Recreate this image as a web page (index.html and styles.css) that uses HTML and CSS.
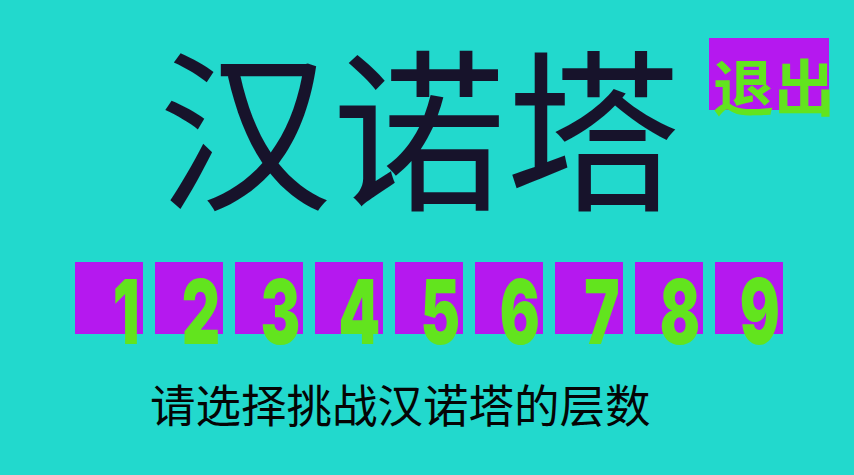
FILE: index.html
```html
<!DOCTYPE html>
<html lang="zh-CN">
<head>
<meta charset="utf-8">
<title>汉诺塔</title>
<link rel="stylesheet" href="styles.css">
</head>
<body>
<div class="page">
  <header class="top">
    <h1 class="title">汉诺塔</h1>
    <button class="exit" type="button">退出</button>
  </header>
  <div class="levels">
    <button class="level" type="button"><span class="num">1</span></button>
    <button class="level" type="button"><span class="num">2</span></button>
    <button class="level" type="button"><span class="num">3</span></button>
    <button class="level" type="button"><span class="num">4</span></button>
    <button class="level" type="button"><span class="num">5</span></button>
    <button class="level" type="button"><span class="num">6</span></button>
    <button class="level" type="button"><span class="num">7</span></button>
    <button class="level" type="button"><span class="num">8</span></button>
    <button class="level" type="button"><span class="num">9</span></button>
  </div>
  <p class="prompt">请选择挑战汉诺塔的层数</p>
</div>
</body>
</html>
```
FILE: styles.css
```css
html, body {
  margin: 0;
  padding: 0;
}
body {
  background: #22d9cd;
  width: 854px;
  height: 475px;
  overflow: hidden;
  font-family: "Noto Sans CJK SC", "Noto Sans", sans-serif;
}
.page {
  display: flex;
  flex-direction: column;
}
.top {
  display: flex;
  align-items: flex-start;
  height: 262px;
}
.title {
  flex: none;
  margin: 17px 0 0 154px;
  padding: 0 6px 0 4px;
  font-size: 174px;
  line-height: 1.2;
  font-weight: 400;
  color: #17132b;
  white-space: nowrap;
}
.exit {
  flex: none;
  margin: 38px 0 0 23px;
  width: 120px;
  height: 72px;
  border: 0;
  padding: 16px 0 0 4px;
  background: #b518ef;
  color: #62e41e;
  font-family: "Noto Sans CJK SC", sans-serif;
  font-weight: 700;
  font-size: 61px;
  line-height: 1;
  text-align: left;
  white-space: nowrap;
  overflow: visible;
  display: flex;
  align-items: flex-start;
}
.levels {
  display: flex;
  gap: 12px;
  padding-left: 75px;
}
.level {
  flex: none;
  width: 68px;
  height: 72px;
  border: 0;
  margin: 0;
  padding: 5px 3px 0 0;
  background: #b518ef;
  color: #62e41e;
  font-family: Inter, "Liberation Sans", sans-serif;
  font-weight: 900;
  font-size: 90px;
  line-height: 1;
  display: flex;
  justify-content: flex-end;
  align-items: flex-start;
  overflow: visible;
}
.num {
  display: inline-block;
  transform: scaleX(0.66);
  transform-origin: right top;
}
.prompt {
  margin: 47px 0 0 150px;
  font-size: 45.5px;
  line-height: 1;
  color: #050505;
  white-space: nowrap;
}
```
